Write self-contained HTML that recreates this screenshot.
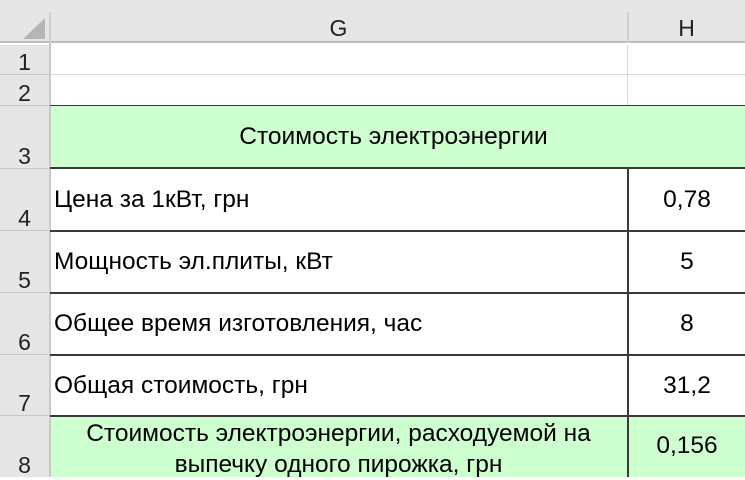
<!DOCTYPE html>
<html><head><meta charset="utf-8"><style>
body{margin:0;width:745px;height:477px;overflow:hidden;background:#fff;font-family:"Liberation Sans",Arial,sans-serif;position:relative}
div{position:absolute;box-sizing:border-box}
.hd{background:#e6e6e6}
.rn{left:0;width:49px;font-size:23px;color:#222;text-align:center;background:#e6e6e6;border-bottom:1px solid #c8c8c8;display:flex;align-items:flex-end;justify-content:center;padding-bottom:0px;line-height:24px}
.t{font-size:24.5px;color:#000;line-height:28px;white-space:nowrap}
.hl{height:2px;background:#3a3a3a;left:50px;width:695px}
.gl{height:1px;background:#d9d9d9;left:50px;width:695px}
</style></head><body>
<div class="hd" style="left:0;top:0;width:745px;height:43px;border-bottom:2px solid #bdbdbd"></div>
<svg style="position:absolute;left:22px;top:18px" width="24" height="22"><polygon points="23,0 23,21 1,21" fill="#b5b5b5"/></svg>
<div style="left:49px;top:12px;width:2px;height:31px;background:#cfcfcf"></div>
<div style="left:627px;top:12px;width:2px;height:31px;background:#cfcfcf"></div>
<div class="t" style="left:50px;top:14px;width:577px;text-align:center;color:#222;font-size:23px">G</div>
<div class="t" style="left:628px;top:14px;width:117px;text-align:center;color:#222;font-size:23px">H</div>
<div style="left:49px;top:43px;width:2px;height:434px;background:#c8c8c8"></div>

<div class="rn" style="top:45px;height:30px">1</div>
<div class="rn" style="top:75px;height:31px">2</div>
<div class="rn" style="top:106px;height:63px">3</div>
<div class="rn" style="top:169px;height:62px">4</div>
<div class="rn" style="top:231px;height:62px">5</div>
<div class="rn" style="top:293px;height:62px">6</div>
<div class="rn" style="top:355px;height:61px">7</div>
<div class="rn" style="top:416px;height:61px;border:none;padding-bottom:0">8</div>

<div class="gl" style="top:74px"></div>
<div style="left:627px;top:45px;width:1px;height:60px;background:#d9d9d9"></div>

<div style="left:51px;top:106px;width:694px;height:62px;background:#ceffce"></div>
<div style="left:51px;top:416px;width:694px;height:61px;background:#ceffce"></div>
<div class="hl" style="top:105px;height:1px"></div>
<div class="hl" style="top:167px"></div>
<div class="hl" style="top:230px"></div>
<div class="hl" style="top:292px"></div>
<div class="hl" style="top:354px"></div>
<div class="hl" style="top:415px"></div>
<div style="left:627px;top:168px;width:2px;height:309px;background:#3a3a3a"></div>

<div class="t" style="left:105px;top:123px;width:577px;text-align:center">Стоимость электроэнергии</div>
<div class="t" style="left:54px;top:186px">Цена за 1кВт, грн</div>
<div class="t" style="left:54px;top:248px">Мощность эл.плиты, кВт</div>
<div class="t" style="left:54px;top:310px">Общее время изготовления, час</div>
<div class="t" style="left:54px;top:372px">Общая стоимость, грн</div>
<div class="t" style="left:50px;top:418px;width:577px;text-align:center;line-height:31px">Стоимость электроэнергии, расходуемой на<br>выпечку одного пирожка, грн</div>
<div class="t" style="left:629px;top:186px;width:116px;text-align:center">0,78</div>
<div class="t" style="left:629px;top:248px;width:116px;text-align:center">5</div>
<div class="t" style="left:629px;top:310px;width:116px;text-align:center">8</div>
<div class="t" style="left:629px;top:372px;width:116px;text-align:center">31,2</div>
<div class="t" style="left:629px;top:432px;width:116px;text-align:center">0,156</div>
</body></html>
